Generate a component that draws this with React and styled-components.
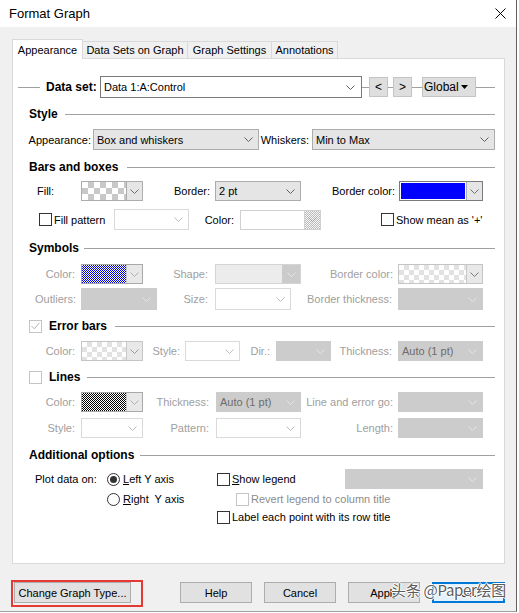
import React from 'react';
import styled, { createGlobalStyle } from 'styled-components';

const Global = createGlobalStyle`
  html, body { margin: 0; padding: 0; background: #ffffff; }
  body { font-family: "Liberation Sans", Arial, sans-serif; font-size: 11px; color: #000; }
  * { box-sizing: border-box; }
`;

const Window = styled.div`
  position: relative;
  width: 517px;
  height: 612px;
  background: #f0f0f0;
  border-right: 1px solid #5f5f5f;
  border-bottom: 1px solid #a0a0a0;
  display: flex;
  flex-direction: column;
  overflow: hidden;
`;

const TitleBar = styled.div`
  height: 27px;
  background: #ffffff;
  display: flex;
  align-items: center;
  justify-content: space-between;
  padding: 0 10px 0 9px;
  font-size: 13px;
  flex: none;
`;

const Body = styled.div`
  padding: 12px 0 0 12px;
`;

const Tabs = styled.div`
  display: flex;
  align-items: flex-end;
  height: 19px;
  position: relative;
  z-index: 1;
`;

const Tab = styled.div`
  width: ${p => p.$w}px;
  height: ${p => (p.$active ? 20 : 17)}px;
  margin-bottom: ${p => (p.$active ? -1 : 0)}px;
  margin-left: ${p => (p.$first ? 0 : -1)}px;
  background: ${p => (p.$active ? '#ffffff' : '#f0f0f0')};
  border: 1px solid #d9d9d9;
  border-bottom: none;
  display: flex;
  align-items: center;
  justify-content: center;
  white-space: nowrap;
`;

const Panel = styled.div`
  width: 493px;
  height: 506px;
  background: #ffffff;
  border: 1px solid #d9d9d9;
  display: flex;
  flex-direction: column;
`;

const Row = styled.div`
  display: flex;
  align-items: center;
  height: ${p => p.$h}px;
  margin-top: ${p => p.$mt}px;
  padding-left: ${p => p.$pl || 0}px;
  flex: none;
`;

const Header = styled.div`
  display: flex;
  align-items: center;
  height: 14px;
  margin-top: ${p => p.$mt}px;
  padding: 0 9px 0 16px;
  font-weight: bold;
  font-size: 12px;
  flex: none;
  white-space: nowrap;
`;

const HeaderLine = styled.div`
  flex: 1;
  height: 1px;
  background: #a0a0a0;
  margin-left: ${p => p.$ml || 7}px;
`;

const HLine = styled.div`
  width: ${p => p.$w}px;
  height: 1px;
  background: #a0a0a0;
  margin-left: ${p => p.$ml || 0}px;
  flex: none;
`;

const Lbl = styled.span`
  flex: none;
  width: ${p => p.$w}px;
  text-align: ${p => p.$align || 'right'};
  padding-right: ${p => p.$pr || 0}px;
  padding-left: ${p => p.$pl || 0}px;
  color: ${p => (p.$dis ? '#a0a0a0' : '#000')};
  font-weight: ${p => (p.$bold ? 'bold' : 'normal')};
  font-size: ${p => (p.$bold ? 12 : 11)}px;
  white-space: nowrap;
`;

const comboStyles = {
  edit: { bg: '#ffffff', border: '#7a7a7a', color: '#000', chev: '#606060' },
  enabled: { bg: '#e5e5e5', border: '#acacac', color: '#000', chev: '#606060' },
  gray: { bg: '#cccccc', border: '#cccccc', color: '#6d6d6d', chev: '#e4e4e4' },
  blank: { bg: '#ffffff', border: '#d9d9d9', color: '#000', chev: '#bdbdbd' },
  shape: { bg: '#ececec', border: '#d4d4d4', color: '#000', chev: '#e6e6e6', btn: '#cbcbcb' },
};

const ComboBox = styled.div`
  flex: none;
  width: ${p => p.$w}px;
  height: ${p => p.$h}px;
  margin-left: ${p => p.$ml || 0}px;
  display: flex;
  align-items: center;
  background: ${p => comboStyles[p.$v].bg};
  border: 1px solid ${p => comboStyles[p.$v].border};
  color: ${p => comboStyles[p.$v].color};
  white-space: nowrap;
`;

const ComboText = styled.span`
  flex: 1;
  padding-left: 3px;
  overflow: hidden;
`;

const DropArea = styled.span`
  flex: none;
  width: ${p => p.$w || 20}px;
  height: 100%;
  display: grid;
  place-items: center;
  background: ${p => p.$bg || 'transparent'};
  border-left: ${p => (p.$line ? `1px solid ${p.$line}` : 'none')};
`;

const Chevron = ({ c }) => (
  <svg width="9" height="5" viewBox="0 0 9 5">
    <path d="M0.5 0.5 L4.5 4.5 L8.5 0.5" fill="none" stroke={c} strokeWidth="1" />
  </svg>
);

const Combo = ({ v, w, h = 20, ml, text, dw }) => (
  <ComboBox $v={v} $w={w} $h={h} $ml={ml}>
    <ComboText>{text}</ComboText>
    <DropArea $w={dw || (comboStyles[v].btn ? 18 : 20)} $bg={comboStyles[v].btn}>
      <Chevron c={comboStyles[v].chev} />
    </DropArea>
  </ComboBox>
);

const patterns = {
  checker: 'repeating-conic-gradient(#c8c8c8 0 25%, #ffffff 0 50%) 0 0 / 12px 12px',
  lightChecker:
    'repeating-conic-gradient(#e2e2e2 0 25%, #ffffff 0 50%) 0 0 / 10px 10px',
  blueDither: 'repeating-conic-gradient(#0000d8 0 25%, #ffffff 0 50%) 0 0 / 2px 2px',
  blackDither: 'repeating-conic-gradient(#000000 0 25%, #ffffff 0 50%) 0 0 / 2px 2px',
  grayDither: 'repeating-conic-gradient(#bdbdbd 0 25%, #f4f4f4 0 50%) 0 0 / 2px 2px',
  blue: '#0000ff',
  white: '#ffffff',
};

const SwatchBox = styled.div`
  flex: none;
  width: ${p => p.$w}px;
  height: 20px;
  display: flex;
  border: 1px solid ${p => p.$border};
`;

const SwatchFill = styled.div`
  flex: 1;
  background: ${p => patterns[p.$pat]};
  box-shadow: ${p => (p.$frame ? `inset 0 0 0 1px ${p.$frame}` : 'none')};
`;

const Swatch = ({ w, pat, border = '#adadad', btn = '#e5e5e5', chev = '#707070', frame, line = '#adadad' }) => (
  <SwatchBox $w={w} $border={border}>
    <SwatchFill $pat={pat} $frame={frame} />
    <DropArea $w={16} $bg={patterns[btn] || btn} $line={line}>
      <Chevron c={chev} />
    </DropArea>
  </SwatchBox>
);

const BoxCheck = styled.span`
  flex: none;
  width: 13px;
  height: 13px;
  border: 1px solid ${p => (p.$dis ? '#c4c4c4' : '#333333')};
  background: #ffffff;
  display: grid;
  place-items: center;
`;

const CheckGroup = styled.label`
  flex: none;
  display: flex;
  align-items: center;
  gap: ${p => p.$gap || 2}px;
  width: ${p => (p.$w ? `${p.$w}px` : 'auto')};
  margin-left: ${p => p.$ml || 0}px;
  color: ${p => (p.$dis ? '#8c8c8c' : '#000')};
  white-space: nowrap;
`;

const Check = ({ dis, checked }) => (
  <BoxCheck $dis={dis}>
    {checked && (
      <svg width="9" height="8" viewBox="0 0 9 8">
        <path d="M0.5 4 L3.3 6.8 L8.5 0.8" fill="none" stroke={dis ? '#b4b4b4' : '#333'} strokeWidth="1" />
      </svg>
    )}
  </BoxCheck>
);

const RadioCircle = styled.span`
  flex: none;
  width: 13px;
  height: 13px;
  border-radius: 50%;
  border: 1px solid #333333;
  background: #ffffff;
  display: grid;
  place-items: center;
  &::after {
    content: '';
    width: 7px;
    height: 7px;
    border-radius: 50%;
    background: ${p => (p.$checked ? '#333333' : 'transparent')};
  }
`;

const SmallBtn = styled.div`
  flex: none;
  width: ${p => p.$w}px;
  height: 20px;
  background: #dedede;
  border: 1px solid #c4c4c4;
  display: flex;
  align-items: center;
  justify-content: ${p => (p.$between ? 'space-between' : 'center')};
  padding: ${p => (p.$between ? '0 7px 0 1px' : '0')};
  font-size: 12px;
`;

const Footer = styled.div`
  display: flex;
  align-items: flex-start;
  margin-top: 16px;
  padding-left: 11px;
`;

const Highlight = styled.div`
  flex: none;
  width: 132px;
  border: 2px solid #e53935;
  padding: 0 10px 2px 1px;
`;

const Button = styled.div`
  flex: none;
  width: ${p => p.$w}px;
  height: 21px;
  margin-left: ${p => p.$ml || 0}px;
  margin-top: ${p => p.$mt || 0}px;
  background: ${p => (p.$def ? '#e5f1fb' : '#e1e1e1')};
  border: 1px solid ${p => (p.$def ? '#0078d7' : '#adadad')};
  box-shadow: ${p => (p.$def ? 'inset 0 0 0 1px #0078d7' : 'none')};
  display: flex;
  align-items: center;
  justify-content: center;
  white-space: nowrap;
`;

const Watermark = styled.div`
  position: absolute;
  right: 10px;
  bottom: 11px;
  font-family: "Noto Sans CJK SC", "Liberation Sans", sans-serif;
  font-size: 15px;
  color: #5c5c5c;
  text-shadow: 0 0 1px #fff, 1px 0 0 #fff, -1px 0 0 #fff, 0 1px 0 #fff, 0 -1px 0 #fff;
  white-space: nowrap;
  letter-spacing: -0.3px;
  pointer-events: none;
`;

const CloseIcon = () => (
  <svg width="11" height="11" viewBox="0 0 11 11">
    <path d="M0.5 0.5 L10.5 10.5 M10.5 0.5 L0.5 10.5" stroke="#000" strokeWidth="1" />
  </svg>
);

const Tri = () => (
  <svg width="7" height="4" viewBox="0 0 7 4">
    <path d="M0 0 L7 0 L3.5 4 Z" fill="#000" />
  </svg>
);

export default function App() {
  return (
    <>
      <Global />
      <Window>
        <TitleBar>
          <span>Format Graph</span>
          <CloseIcon />
        </TitleBar>
        <Body>
          <Tabs>
            <Tab $w={71} $active $first>Appearance</Tab>
            <Tab $w={106}>Data Sets on Graph</Tab>
            <Tab $w={85}>Graph Settings</Tab>
            <Tab $w={67}>Annotations</Tab>
          </Tabs>
          <Panel>
            <Row $h={22} $mt={17}>
              <HLine $w={22} $ml={5} />
              <Lbl $w={60} $align="left" $pl={6} $bold>Data set:</Lbl>
              <Combo v="edit" w={262} h={22} text="Data 1:A:Control" dw={22} />
              <HLine $w={7} />
              <SmallBtn $w={19}>&lt;</SmallBtn>
              <HLine $w={5} />
              <SmallBtn $w={19}>&gt;</SmallBtn>
              <HLine $w={10} />
              <SmallBtn $w={54} $between>
                <span>Global</span>
                <Tri />
              </SmallBtn>
              <HLine $w={19} />
            </Row>

            <Header $mt={9}>Style<HeaderLine /></Header>
            <Row $h={21} $mt={8}>
              <Lbl $w={80} $pr={2}>Appearance:</Lbl>
              <Combo v="enabled" w={166} h={21} text="Box and whiskers" />
              <Lbl $w={53} $pr={3}>Whiskers:</Lbl>
              <Combo v="enabled" w={183} h={21} text="Min to Max" />
            </Row>

            <Header $mt={10}>Bars and boxes<HeaderLine $ml={9} /></Header>
            <Row $h={20} $mt={7}>
              <Lbl $w={68} $align="left" $pl={24}>Fill:</Lbl>
              <Swatch w={62} pat="checker" />
              <Lbl $w={72} $pr={5}>Border:</Lbl>
              <Combo v="enabled" w={86} text="2 pt" />
              <Lbl $w={98} $pr={4}>Border color:</Lbl>
              <Swatch w={84} pat="blue" border="#7a7a7a" frame="#ffffff" />
            </Row>
            <Row $h={21} $mt={8}>
              <CheckGroup $w={75} $ml={26}>
                <Check />
                <span>Fill pattern</span>
              </CheckGroup>
              <Combo v="blank" w={75} h={21} text="" />
              <Lbl $w={51} $pr={6}>Color:</Lbl>
              <Swatch w={81} pat="white" border="#d0d0d0" btn="grayDither" chev="#9a9a9a" line="#d0d0d0" />
              <CheckGroup $ml={60}>
                <Check />
                <span>Show mean as '+'</span>
              </CheckGroup>
            </Row>

            <Header $mt={11}>Symbols<HeaderLine $ml={5} /></Header>
            <Row $h={20} $mt={9}>
              <Lbl $w={68} $pr={6} $dis>Color:</Lbl>
              <Swatch w={62} pat="blueDither" border="#a8a8a8" btn="#e8e8e8" chev="#b0b0b0" line="#c8c8c8" />
              <Lbl $w={72} $pr={7} $dis>Shape:</Lbl>
              <Combo v="shape" w={86} text="" />
              <Lbl $w={97} $pr={5} $dis>Border color:</Lbl>
              <Swatch w={85} pat="lightChecker" border="#c4c4c4" btn="#e8e8e8" chev="#7a7a7a" line="#c8c8c8" />
            </Row>
            <Row $h={22} $mt={4}>
              <Lbl $w={68} $pr={5} $dis>Outliers:</Lbl>
              <Combo v="gray" w={76} h={22} text="" />
              <Lbl $w={58} $pr={7} $dis>Size:</Lbl>
              <Combo v="blank" w={76} h={22} text="" />
              <Lbl $w={107} $pr={6} $dis>Border thickness:</Lbl>
              <Combo v="gray" w={85} h={22} text="" />
            </Row>

            <Header $mt={9}>
              <Check dis checked />
              <span style={{ marginLeft: 7 }}>Error bars</span>
              <HeaderLine $ml={8} />
            </Header>
            <Row $h={20} $mt={8}>
              <Lbl $w={68} $pr={6} $dis>Color:</Lbl>
              <Swatch w={62} pat="lightChecker" border="#c4c4c4" btn="#e8e8e8" chev="#9a9a9a" line="#c8c8c8" />
              <Lbl $w={42} $pr={5} $dis>Style:</Lbl>
              <Combo v="blank" w={55} text="" />
              <Lbl $w={36} $pr={6} $dis>Dir.:</Lbl>
              <Combo v="gray" w={55} text="" />
              <Lbl $w={67} $pr={6} $dis>Thickness:</Lbl>
              <Combo v="gray" w={85} text="Auto (1 pt)" />
            </Row>

            <Header $mt={9}>
              <Check dis />
              <span style={{ marginLeft: 7 }}>Lines</span>
              <HeaderLine $ml={7} />
            </Header>
            <Row $h={20} $mt={8}>
              <Lbl $w={68} $pr={6} $dis>Color:</Lbl>
              <Swatch w={62} pat="blackDither" border="#a8a8a8" btn="#e8e8e8" chev="#b0b0b0" line="#c8c8c8" />
              <Lbl $w={73} $pr={7} $dis>Thickness:</Lbl>
              <Combo v="gray" w={85} text="Auto (1 pt)" />
              <Lbl $w={97} $pr={5} $dis>Line and error go:</Lbl>
              <Combo v="gray" w={85} text="" />
            </Row>
            <Row $h={20} $mt={6}>
              <Lbl $w={68} $pr={6} $dis>Style:</Lbl>
              <Combo v="blank" w={62} text="" />
              <Lbl $w={73} $pr={7} $dis>Pattern:</Lbl>
              <Combo v="blank" w={85} text="" />
              <Lbl $w={97} $pr={5} $dis>Length:</Lbl>
              <Combo v="gray" w={85} text="" />
            </Row>

            <Header $mt={10}>Additional options<HeaderLine $ml={6} /></Header>
            <Row $h={20} $mt={7}>
              <Lbl $w={94} $align="left" $pl={22}>Plot data on:</Lbl>
              <CheckGroup $w={110} $gap={3}>
                <RadioCircle $checked />
                <span><u>L</u>eft Y axis</span>
              </CheckGroup>
              <CheckGroup $w={128}>
                <Check />
                <span><u>S</u>how legend</span>
              </CheckGroup>
              <Combo v="gray" w={138} text="" />
            </Row>
            <Row $h={16} $mt={2} $pl={94}>
              <CheckGroup $w={129} $gap={3}>
                <RadioCircle />
                <span><u>R</u>ight&nbsp; Y axis</span>
              </CheckGroup>
              <CheckGroup $dis>
                <Check dis />
                <span>Revert legend to column title</span>
              </CheckGroup>
            </Row>
            <Row $h={16} $mt={2} $pl={204}>
              <CheckGroup>
                <Check />
                <span>Label each point with its row title</span>
              </CheckGroup>
            </Row>
          </Panel>
        </Body>
        <Footer>
          <Highlight>
            <Button $w={117}>Change Graph Type...</Button>
          </Highlight>
          <Button $w={72} $ml={37} $mt={2}>Help</Button>
          <Button $w={72} $ml={12} $mt={2}>Cancel</Button>
          <Button $w={72} $ml={12} $mt={2}>Apply</Button>
          <Button $w={73} $ml={12} $mt={2} $def>OK</Button>
        </Footer>
        <Watermark>头条 @Paper绘图</Watermark>
      </Window>
    </>
  );
}
